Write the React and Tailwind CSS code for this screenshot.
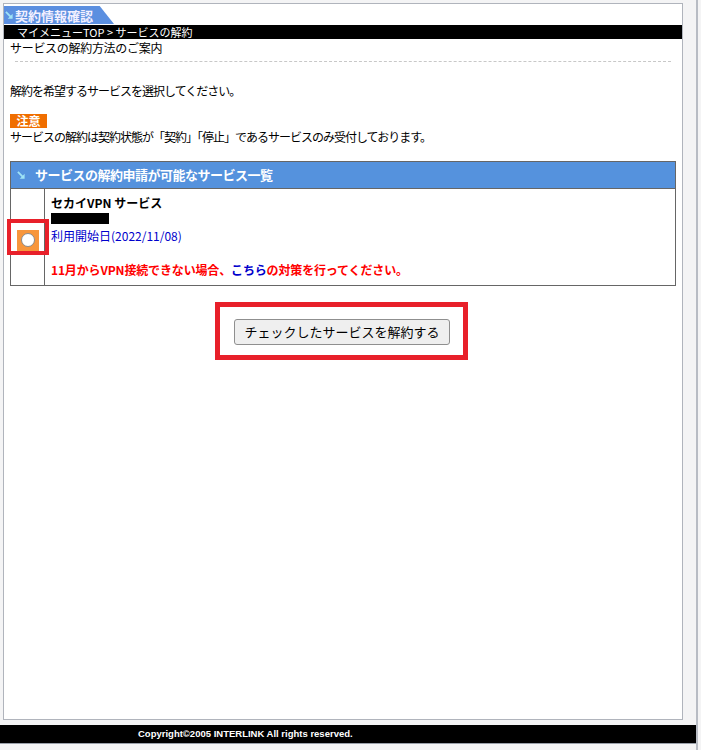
import React from 'react';

const jp = { fontFamily: '"MS UI Gothic", "Noto Sans CJK JP", sans-serif' };

function ArrowIcon({ className }) {
  return (
    <svg viewBox="0 0 10 10" className={className}>
      <path d="M1 1 L7 7" stroke="#9fe3f5" strokeWidth="2" fill="none" />
      <path d="M8.5 3 L8.5 8.5 L3 8.5 Z" fill="#9fe3f5" />
    </svg>
  );
}

function ServiceTable() {
  return (
    <div className="mx-[6px] mt-[17px] border border-[#666666]">
      {/* 見出し */}
      <div className="h-[27px] bg-[#5592dd] border-b border-[#666666] flex items-center pl-[6px]">
        <ArrowIcon className="w-[9px] h-[9px] mr-[9px]" />
        <span className="text-white font-bold text-[13px] tracking-[-0.5px]">サービスの解約申請が可能なサービス一覧</span>
      </div>
      <div className="flex h-[96px]">
        <div className="relative w-[34px] border-r border-[#666666] flex items-center justify-center">
          <div className="mt-[6px] w-[22px] h-[21px] bg-[#f7963c] flex items-center justify-center">
            <div className="w-[14px] h-[14px] rounded-full bg-white border border-[#8a8a8a]" />
          </div>
          <div className="absolute left-[-4px] top-[30px] w-[42px] h-[36px] border-[4px] border-[#e8202a]" />
        </div>
        <div className="flex-1 pl-[6px] pt-[6px] text-[12px]">
          <div className="font-bold text-black leading-[15px]">セカイVPN サービス</div>
          <div className="mt-[3px] w-[58px] h-[11px] bg-black" />
          <div className="mt-[4px] text-[#0000cc] leading-[15px]">利用開始日(2022/11/08)</div>
          <div className="mt-[19px] font-bold text-[#ff0000] leading-[15px] tracking-[-0.15px]">
            11月からVPN接続できない場合、<span className="text-[#0000cc]">こちら</span>の対策を行ってください。
          </div>
        </div>
      </div>
    </div>
  );
}

export default function App() {
  return (
    <div className="w-[701px] h-[750px] bg-[#f4f4f5] overflow-hidden" style={jp}>
      <div className="w-[698px] h-[750px] border-r-2 border-[#b8bcc4] flex flex-col">
        <div className="ml-[3px] mt-[3px] w-[680px] h-[717px] border border-[#b0b4bc] bg-white text-black">
          {/* タイトルタブ */}
          <div className="mt-[2px] h-[18px] w-[110px] bg-[#5b8fe0] [clip-path:polygon(0_0,87%_0,100%_100%,0_100%)] flex items-center pl-[1px]">
            <ArrowIcon className="w-[9px] h-[9px] mr-[1px]" />
            <span className="text-[#f2f0ff] font-bold text-[13px] leading-none">契約情報確認</span>
          </div>
          <div className="mt-[1px] h-[14px] bg-black text-white text-[11px] leading-[14px] pl-[13px]">
            マイメニューTOP &gt; サービスの解約
          </div>
          <div className="pl-[6px] text-[12px] leading-[15px] mt-[1px] tracking-[-0.3px]">サービスの解約方法のご案内</div>
          <div className="mx-[11px] mt-[6px] border-t border-dashed border-[#c8c8c8]" />
          <div className="pl-[6px] text-[12px] leading-[15px] mt-[21px] tracking-[-1px]">解約を希望するサービスを選択してください。</div>
          <div className="ml-[6px] mt-[16px] w-[37px] h-[14px] bg-[#f06e00] text-white font-bold text-[12px] leading-[14px] text-center">注意</div>
          <div className="pl-[6px] text-[12px] leading-[15px] mt-[1px] tracking-[-1px]">サービスの解約は契約状態が「契約」「停止」であるサービスのみ受付しております。</div>

          <ServiceTable />

          <div className="flex mt-[16px] pl-[211px]">
            <div className="border-[5px] border-[#e8202a] pl-[14px] pr-[13px] pt-[11px] pb-[10px]">
              <button className="w-[216px] h-[26px] bg-[#efefef] border border-[#8f8f8f] rounded-[3px] text-[13px] text-black leading-none">
                チェックしたサービスを解約する
              </button>
            </div>
          </div>
        </div>
        <div className="mt-[5px] h-[19px] w-[696px] bg-black border-b border-[#9aa0aa] flex items-center pl-[138px]">
          <span className="text-white font-bold text-[9.5px]" style={{ fontFamily: '"Liberation Sans", Arial, sans-serif' }}>
            Copyright©2005 INTERLINK All rights reserved.
          </span>
        </div>
      </div>
    </div>
  );
}
